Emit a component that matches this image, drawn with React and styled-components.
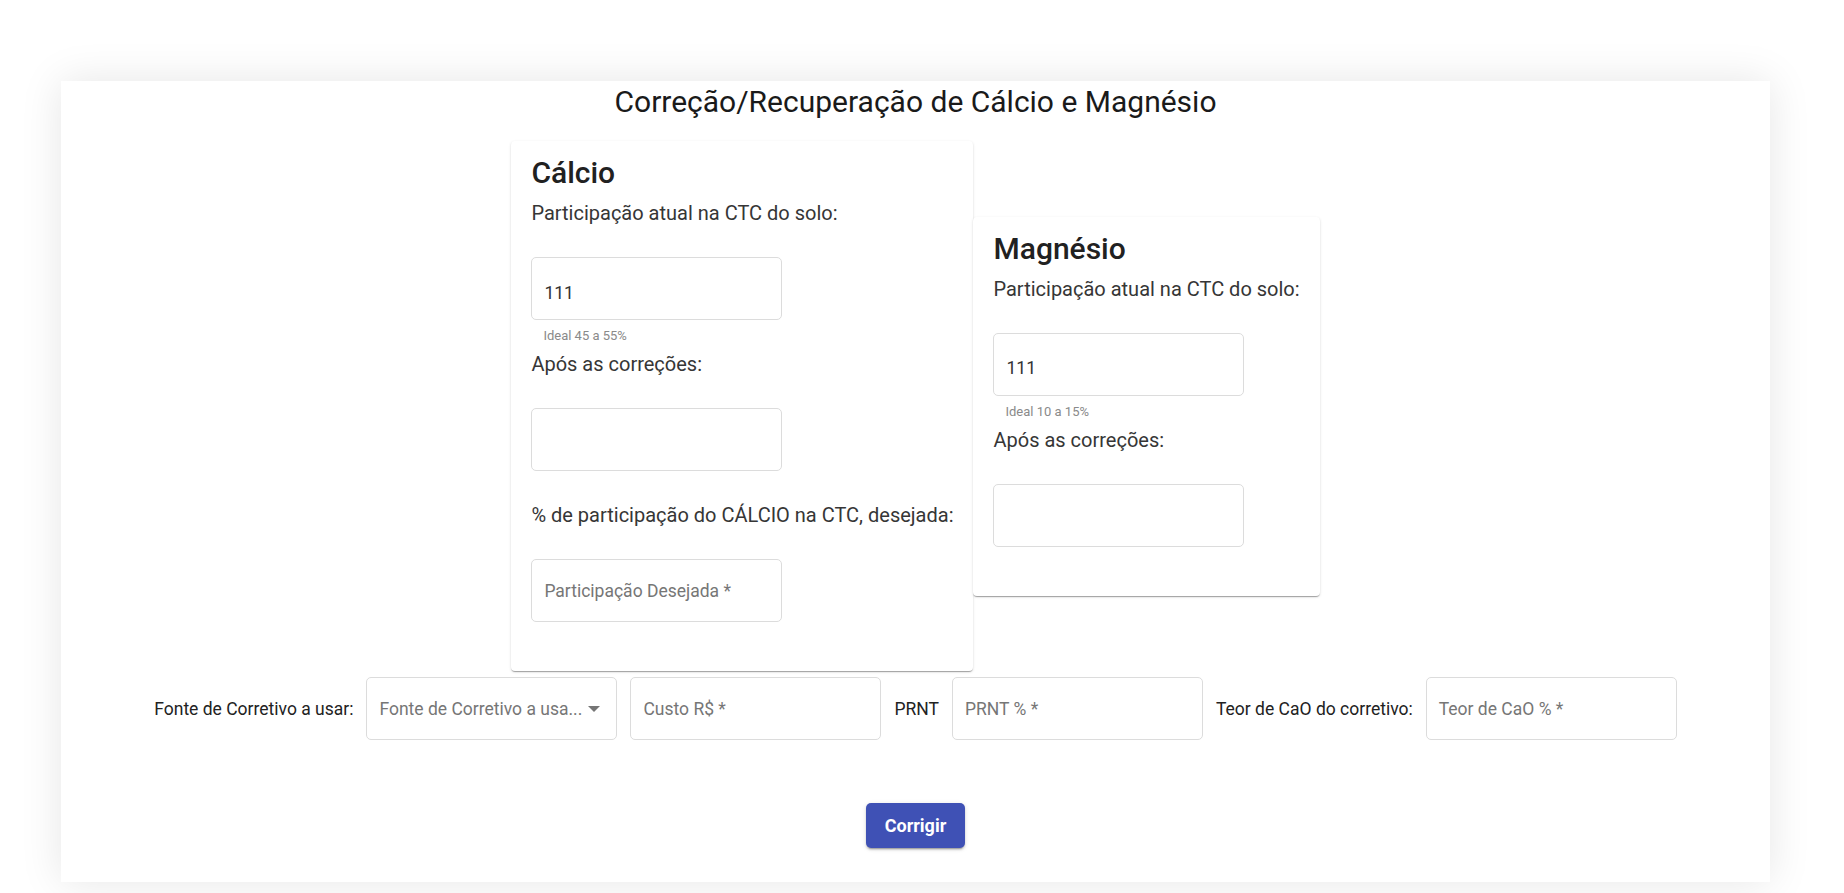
import React from "react";
import styled, { createGlobalStyle } from "styled-components";

const GlobalStyle = createGlobalStyle`
  html, body {
    margin: 0;
    padding: 0;
    background: #fff;
    font-family: Roboto, "Liberation Sans", sans-serif;
  }
`;

const Page = styled.div`
  padding: 81px 74px 11px 61px;
`;

const Panel = styled.section`
  background: #fff;
  box-shadow: 0 0 40px rgba(0, 0, 0, 0.1);
  padding: 3px 0 34px;
  display: flex;
  flex-direction: column;
  align-items: center;
`;

const Title = styled.h1`
  margin: 0;
  font-size: 30px;
  font-weight: 400;
  line-height: 36px;
  color: #1a1a1a;
`;

const Cards = styled.div`
  display: flex;
  align-items: center;
  margin-top: 21px;
`;

const Card = styled.div`
  background: #fff;
  border-radius: 4px;
  box-shadow: 0 2px 1px -1px rgba(0, 0, 0, 0.2), 0 1px 1px 0 rgba(0, 0, 0, 0.14),
    0 1px 3px 0 rgba(0, 0, 0, 0.12);
  padding: 14px 20px 20px;
  display: flex;
  flex-direction: column;
  align-items: flex-start;
`;

const CardTitle = styled.h2`
  margin: 0 0 7px;
  font-size: 30px;
  font-weight: 500;
  line-height: 36px;
  color: #212121;
`;

const FieldLabel = styled.div`
  font-size: 20px;
  line-height: 30px;
  color: #363636;
  white-space: nowrap;
`;

const Box = styled.div`
  box-sizing: border-box;
  width: 251px;
  height: 63px;
  border: 1px solid #dcdcdc;
  border-radius: 5px;
  background: #fff;
  display: flex;
  align-items: center;
  padding: ${(p) => (p.$filled ? "8px 12px 0" : "0 12px")};
  font-size: 17.5px;
  color: ${(p) => (p.$filled ? "#333" : "#767676")};
  margin-top: ${(p) => p.$top || 0}px;
  white-space: nowrap;
`;

const Helper = styled.div`
  height: 29px;
  box-sizing: border-box;
  padding: 8px 0 0 12px;
  font-size: 13px;
  line-height: 16px;
  color: #8a8a8a;
`;

const Row = styled.div`
  display: flex;
  align-items: center;
  gap: 13px;
  margin-top: 6px;
`;

const RowLabel = styled.span`
  font-size: 17.5px;
  color: #222;
  white-space: nowrap;
`;

const SelectBox = styled(Box)`
  justify-content: space-between;
  padding-right: 16px;
`;

const Button = styled.button`
  margin-top: 63px;
  width: 99px;
  height: 45px;
  border: none;
  border-radius: 5px;
  background: #3f51b5;
  color: #fff;
  font-family: Roboto, "Liberation Sans", sans-serif;
  font-size: 18px;
  font-weight: 700;
  box-shadow: 0 3px 1px -2px rgba(0, 0, 0, 0.2), 0 2px 2px 0 rgba(0, 0, 0, 0.14),
    0 1px 5px 0 rgba(0, 0, 0, 0.12);
  cursor: pointer;
`;

function Field({ label, value, placeholder, helper }) {
  return (
    <>
      <FieldLabel>{label}</FieldLabel>
      <Box $top={29} $filled={!!value}>
        {value || placeholder}
      </Box>
      <Helper>{helper}</Helper>
    </>
  );
}

function Arrow() {
  return (
    <svg width="12" height="6" viewBox="0 0 10 5">
      <path d="M0 0l5 5 5-5z" fill="#757575" />
    </svg>
  );
}

export default function App() {
  return (
    <Page>
      <GlobalStyle />
      <Panel>
        <Title>Correção/Recuperação de Cálcio e Magnésio</Title>
        <Cards>
          <Card>
            <CardTitle>Cálcio</CardTitle>
            <Field
              label="Participação atual na CTC do solo:"
              value="111"
              helper="Ideal 45 a 55%"
            />
            <Field label="Após as correções:" />
            <Field
              label="% de participação do CÁLCIO na CTC, desejada:"
              placeholder="Participação Desejada *"
            />
          </Card>
          <Card>
            <CardTitle>Magnésio</CardTitle>
            <Field
              label="Participação atual na CTC do solo:"
              value="111"
              helper="Ideal 10 a 15%"
            />
            <Field label="Após as correções:" />
          </Card>
        </Cards>
        <Row>
          <RowLabel>Fonte de Corretivo a usar:</RowLabel>
          <SelectBox>
            <span>Fonte de Corretivo a usa...</span>
            <Arrow />
          </SelectBox>
          <Box>Custo R$ *</Box>
          <RowLabel>PRNT</RowLabel>
          <Box>PRNT % *</Box>
          <RowLabel>Teor de CaO do corretivo:</RowLabel>
          <Box>Teor de CaO % *</Box>
        </Row>
        <Button>Corrigir</Button>
      </Panel>
    </Page>
  );
}
